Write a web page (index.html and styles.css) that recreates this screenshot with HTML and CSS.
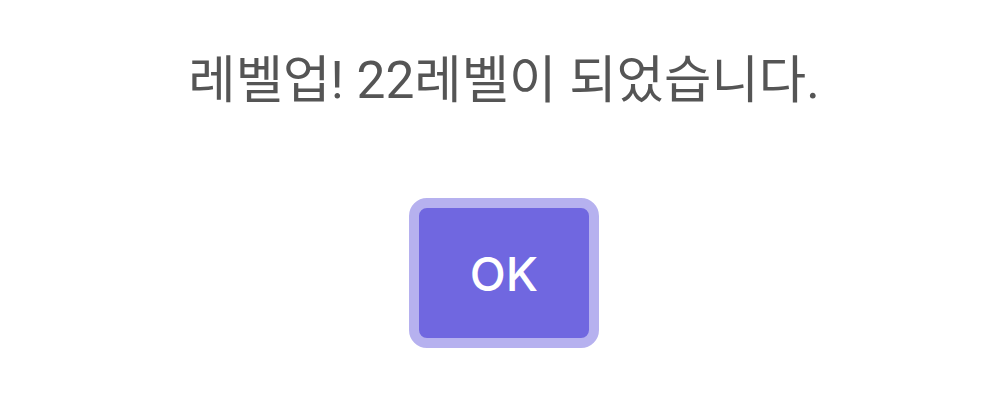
FILE: index.html
```html
<!DOCTYPE html>
<html lang="ko">
<head>
  <meta charset="UTF-8">
  <meta name="viewport" content="width=device-width, initial-scale=1.0">
  <title>레벨업</title>
  <link rel="stylesheet" href="styles.css">
</head>
<body>
  <div class="dialog">
    <p class="message">레벨업! 22레벨이 되었습니다.</p>
    <button class="ok-btn" type="button">OK</button>
  </div>
</body>
</html>
```

FILE: styles.css
```css
html, body {
  margin: 0;
  padding: 0;
  background: #fff;
}

.dialog {
  display: flex;
  flex-direction: column;
  align-items: center;
  padding-top: 51px;
  font-family: Roboto, "Noto Sans CJK KR", sans-serif;
}

.message {
  margin: 0;
  color: #555;
  font-size: 51.5px;
  line-height: 60px;
  padding-left: 3px;
}

.ok-btn {
  margin-top: 87px;
  margin-left: 3px;
  width: 190px;
  height: 150px;
  box-sizing: border-box;
  border: 10px solid #b6b1ef;
  border-radius: 18px;
  background-color: #7067e0;
  color: #fff;
  font-family: Inter, Roboto, sans-serif;
  font-size: 47px;
  font-weight: 500;
  cursor: pointer;
}

.ok-btn:hover {
  background-color: #6a60dc;
}
```
